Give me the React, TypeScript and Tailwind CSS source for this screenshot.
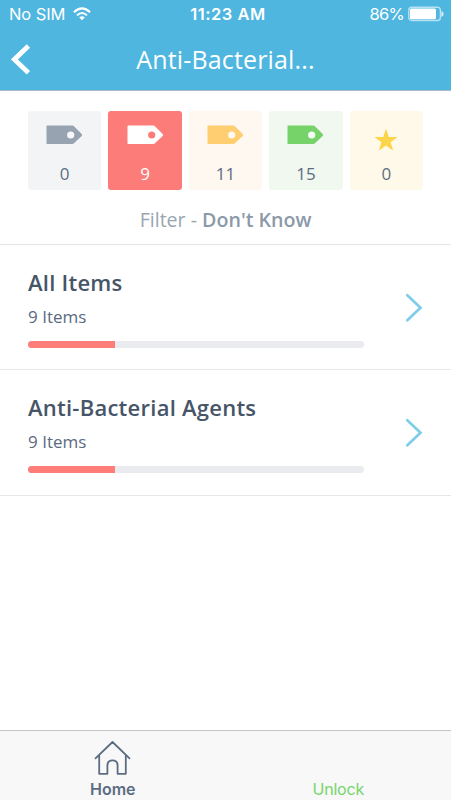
import React from "react";

const openSans = "font-['Open_Sans','Noto_Sans',sans-serif]";

function Tag({ color, hole }: { color: string; hole: string }) {
  return (
    <svg width="37" height="20" viewBox="0 0 37 20">
      <path d="M1.2 .6H26.2Q27.4 .6 28.2 1.5L35.7 9Q36.6 10 35.7 11L28.2 18.1Q27.4 19 26.2 19H1.2Q.5 19 .5 18.3V1.3Q.5 .6 1.2 .6Z" fill={color} />
      <circle cx="24.7" cy="10" r="3.6" fill={hole} />
    </svg>
  );
}

function Star() {
  return (
    <svg width="24" height="24" viewBox="0 0 24 24" className="mt-[3px]">
      <path d="M12 .5L14.8 9H23.6L16.6 14.3L19.2 22.8L12 17.6L4.8 22.8L7.4 14.3L.4 9H9.2Z" fill="#fdd54a" />
    </svg>
  );
}

const tiles = [
  { count: 0, box: "bg-[#f2f4f6] text-[#5d6d80]", icon: <Tag color="#97a3b0" hole="#f7f8f9" /> },
  { count: 9, box: "bg-[#fb7c78] text-white", icon: <Tag color="#ffffff" hole="#fb7c78" /> },
  { count: 11, box: "bg-[#fff8f0] text-[#5d6d80]", icon: <Tag color="#fece70" hole="#fff8f0" /> },
  { count: 15, box: "bg-[#f0f8f0] text-[#5d6d80]", icon: <Tag color="#76d369" hole="#f6fcf6" /> },
  { count: 0, box: "bg-[#fff9ea] text-[#5d6d80]", icon: <Star /> },
];

function ItemRow({ title, count }: { title: string; count: number }) {
  return (
    <div className="flex h-[125.4px] items-start justify-between border-b border-[#e6e7e9] pl-7 pr-[28px]">
      <div className="w-[336px]">
        <div className="mt-[22px] h-[31px] whitespace-nowrap text-[22px] font-semibold leading-[31px] tracking-[0.25px] text-[#465567]">
          {title}
        </div>
        <div className="mt-[7px] h-6 text-[17px] leading-6 text-[#5b6b7f]">
          {count} Items
        </div>
        <div className="mt-[12px] h-[7px] overflow-hidden rounded-full bg-[#e9ebee]">
          <div className="h-full w-[86.5px] bg-[#fd7d79]" />
        </div>
      </div>
      <svg width="18" height="30" viewBox="0 0 18 30" className="mt-[48px]" fill="none" stroke="#7fcde6" strokeWidth="2.7" strokeLinecap="round">
        <path d="M2.3 2.2L15.5 14.8L2.3 27.3" />
      </svg>
    </div>
  );
}

export default function App() {
  return (
    <div className={`flex h-[800px] w-[451px] flex-col overflow-hidden bg-white ${openSans}`}>
      <header className="h-[91px] shrink-0 border-b border-[#a9bac7] bg-[#4eb6df] text-white">
        <div className="grid h-[29px] grid-cols-[1fr_auto_1fr] items-center pl-[9px] pr-[7px] font-['Inter','Liberation_Sans',sans-serif] text-[16.5px] leading-[29px]">
          <div className="flex items-center gap-[8px]">
            <span className="-tracking-[0.1px]">No SIM</span>
            <svg width="18" height="14" viewBox="0 0 18 14" className="-mt-px" fill="none" stroke="white" strokeWidth="2">
              <path d="M.9 5.2Q9-2.5 17.1 5.2M4 8.4Q9 3.6 14 8.4" />
              <path d="M6.2 10.5Q9 8.1 11.8 10.5L9 13.3Z" fill="white" stroke="none" />
            </svg>
          </div>
          <span className="pl-[3px] font-semibold tracking-[0.5px]">11:23 AM</span>
          <div className="flex items-center justify-end gap-[4px]">
            <span className="-tracking-[0.7px]">86%</span>
            <svg width="36" height="16" viewBox="0 0 36 16" className="-mt-px">
              <rect x=".8" y="1.3" width="31.6" height="13.2" rx="3" fill="none" stroke="#b8e1f3" strokeWidth="1.4" />
              <rect x="2" y="2.6" width="26" height="10.6" rx="1.5" fill="white" />
              <path d="M33.4 5Q35.6 5.5 35.6 8T33.4 11Z" fill="#d5edf7" />
            </svg>
          </div>
        </div>
        <div className="grid h-[61px] grid-cols-[60px_1fr_60px] items-center">
          <svg width="20" height="32" viewBox="0 0 20 32" className="ml-[11px]" fill="none" stroke="white" strokeWidth="4.8">
            <path d="M17.4 1.9L3.4 15.4L17.4 28.7" />
          </svg>
          <h1 className="text-center text-[25px] font-normal leading-[58px] tracking-[0.15px] pb-[2px]">Anti-Bacterial...</h1>
        </div>
      </header>

      <main className="flex-1">
        <section className="h-[154px] border-b border-[#e3e4e6] px-7 pt-5">
          <div className="grid grid-cols-5 gap-[7.3px]">
            {tiles.map((tile, i) => (
              <div key={i} className={`flex h-[79px] flex-col items-center rounded-[3px] ${tile.box}`}>
                <div className="flex h-[50px] items-start pt-[14px]">{tile.icon}</div>
                <span className="text-[17px] leading-[26px]">{tile.count}</span>
              </div>
            ))}
          </div>
          <p className="mt-[15px] text-center text-[19.6px] leading-[30px] text-[#9aa6b2]">
            Filter - <span className="font-semibold text-[#8b99a8]">Don't Know</span>
          </p>
        </section>
        <ItemRow title="All Items" count={9} />
        <ItemRow title="Anti-Bacterial Agents" count={9} />
      </main>

      <footer className="flex h-[70px] shrink-0 border-t border-[#c6c6c8] bg-[#f8f8f8] font-['Inter','Liberation_Sans',sans-serif] text-[16px] leading-5">
        <div className="flex w-1/2 flex-col items-center">
          <svg width="37" height="36" viewBox="0 0 37 36" className="mt-[9px]" fill="none" stroke="#5b6d82" strokeWidth="1.8" strokeLinejoin="round" strokeLinecap="round">
            <path d="M1.5 18.3L18.5 2L35.5 18.3M5.2 15V33.8H13.4V25.5Q13.4 20.3 18.5 20.3T23.6 25.5V33.8H31.8V15" />
          </svg>
          <span className="mt-[3px] font-semibold text-[#5b6d82]">Home</span>
        </div>
        <div className="flex w-1/2 justify-center pt-[48px] text-[#76d56b]"><span className="-tracking-[0.2px]">Unlock</span></div>
      </footer>
    </div>
  );
}
